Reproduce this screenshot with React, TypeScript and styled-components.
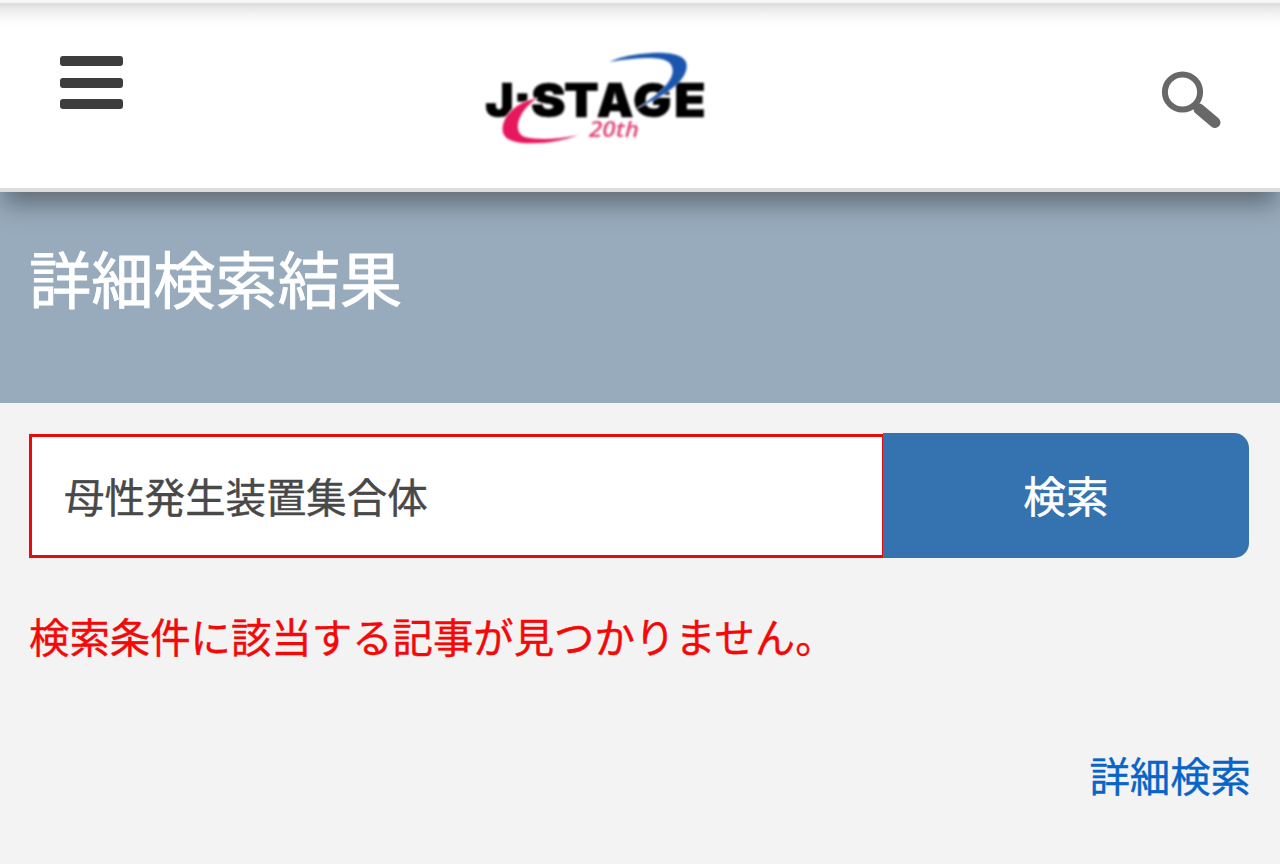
import React from "react";
import styled, { createGlobalStyle } from "styled-components";

const GlobalStyle = createGlobalStyle`
  *, *::before, *::after { box-sizing: border-box; }
  body {
    margin: 0;
    background: #f3f3f3;
    font-family: "Noto Sans CJK JP", sans-serif;
    color: #484848;
    overflow: hidden;
    -webkit-text-stroke: 0.4px currentColor;
  }
`;

const Page = styled.div`
  display: flex;
  flex-direction: column;
  height: 864px;
`;

const Header = styled.header`
  position: relative;
  z-index: 1;
  flex: none;
  height: 192px;
  display: grid;
  grid-template-columns: 410px 250px 1fr;
  justify-items: start;
  align-items: start;
  padding: 40px 56px 0 60px;
  background: linear-gradient(
    #f7f7f7 0,
    #f7f7f7 2px,
    #dadada 4px,
    #e6e6e6 7px,
    #f3f3f3 14px,
    #fcfcfc 22px,
    #ffffff 28px
  );
  border-bottom: 4px solid #dcdcdc;
  box-shadow: 0 16px 22px -4px rgba(60, 66, 72, 0.58);
`;

const MenuButton = styled.button`
  display: flex;
  flex-direction: column;
  gap: 11.5px;
  width: 63px;
  margin: 16px 0 0;
  padding: 0;
  border: 0;
  background: none;
`;

const MenuBar = styled.span`
  height: 10px;
  border-radius: 3px;
  background: #3d3d3d;
`;

const Logo = styled.svg`
  width: 250px;
  height: 115px;
  filter: blur(0.8px);
  -webkit-text-stroke: 0;
`;

const LogoLetter = styled.text`
  font-family: Inter, "Liberation Sans", sans-serif;
  font-weight: 900;
  font-size: 142px;
  stroke: #000;
  stroke-width: 2px;
`;

const LogoAnniversary = styled.text`
  font-family: "Open Sans", sans-serif;
  font-style: italic;
  font-weight: 600;
  font-size: 64px;
`;

const SearchIcon = styled.svg`
  width: 70px;
  height: 70px;
  margin: 25px 0 0;
  justify-self: end;
  filter: blur(0.7px);
`;

const TitleBand = styled.div`
  flex: none;
  height: 211px;
  padding: 39px 29px 0;
  background: #97abbc;
`;

const Title = styled.h1`
  margin: 0;
  font-size: 62.2px;
  line-height: 92px;
  font-weight: 400;
  color: #fff;
  -webkit-text-stroke-width: 0.8px;
`;

const Content = styled.main`
  display: flex;
  flex-direction: column;
  padding: 30px 30px 0 28px;
`;

const SearchForm = styled.div`
  display: flex;
  height: 125px;
  width: 1221px;
`;

const SearchInput = styled.div`
  width: 854px;
  margin: 1px 0 0 1px;
  padding: 0 32px;
  border: solid #e80b0d;
  border-width: 3px 1px 3px 3px;
  background: #fff;
  font-size: 40.4px;
  line-height: 118px;
`;

const SearchButton = styled.button`
  flex: 1;
  padding: 0 0 3px;
  border: 0;
  border-radius: 0 15px 15px 0;
  background: #3572b0;
  color: #fff;
  font-family: inherit;
  font-size: 42.7px;
  line-height: 122px;
  -webkit-text-stroke: 0.5px #fff;
`;

const Message = styled.p`
  margin: 48px 0 0 1px;
  font-size: 40.4px;
  line-height: 60px;
  color: #f50808;
  -webkit-text-stroke-color: #f50808;
`;

const DetailLink = styled.a`
  align-self: flex-end;
  margin: 79px -1px 0 0;
  font-size: 40.4px;
  line-height: 60px;
  color: #0764c8;
  -webkit-text-stroke-color: #0764c8;
`;

const letters = [
  { char: "J", x: 46, width: 86 },
  { char: "S", x: 183, width: 104 },
  { char: "T", x: 282, width: 104 },
  { char: "A", x: 380, width: 110 },
  { char: "G", x: 489, width: 116 },
  { char: "E", x: 612, width: 95 },
];

export default function App() {
  return (
    <>
      <GlobalStyle />
      <Page>
        <Header>
          <MenuButton aria-label="メニュー">
            <MenuBar />
            <MenuBar />
            <MenuBar />
          </MenuButton>
          <Logo viewBox="0 0 750 345" role="img" aria-label="J-STAGE 20th">
            {letters.map(({ char, x, width }) => (
              <LogoLetter
                key={char}
                x={x}
                y={231}
                textLength={width}
                lengthAdjust="spacingAndGlyphs"
              >
                {char}
              </LogoLetter>
            ))}
            <rect x="142" y="160" width="30" height="25" />
            <path
              d="M202 174 C155 184 118 208 103 242 C88 280 104 302 150 308 C215 314 275 304 325 285 C265 298 205 300 168 292 C125 280 140 216 202 174Z"
              fill="#e6175c"
              stroke="#fff"
              strokeWidth="5"
              paintOrder="stroke"
            />
            <path
              d="M418 65 Q470 42 545 39 C610 36 654 48 650 82 C646 125 590 165 503 204 C553 170 608 130 608 92 C608 52 560 44 418 65Z"
              fill="#1b56ae"
              stroke="#fff"
              strokeWidth="3"
              paintOrder="stroke"
            />
            <LogoAnniversary
              x={357}
              y={291}
              textLength={150}
              lengthAdjust="spacingAndGlyphs"
              fill="#df4776"
            >
              20th
            </LogoAnniversary>
          </Logo>
          <SearchIcon viewBox="0 0 70 70" fill="none" stroke="#686868">
            <circle cx="28.5" cy="27" r="17.6" strokeWidth="6" />
            <path d="M45 44 L61 57.5" strokeWidth="11" strokeLinecap="round" />
          </SearchIcon>
        </Header>
        <TitleBand>
          <Title>詳細検索結果</Title>
        </TitleBand>
        <Content>
          <SearchForm>
            <SearchInput>母性発生装置集合体</SearchInput>
            <SearchButton>検索</SearchButton>
          </SearchForm>
          <Message>検索条件に該当する記事が見つかりません。</Message>
          <DetailLink>詳細検索</DetailLink>
        </Content>
      </Page>
    </>
  );
}
